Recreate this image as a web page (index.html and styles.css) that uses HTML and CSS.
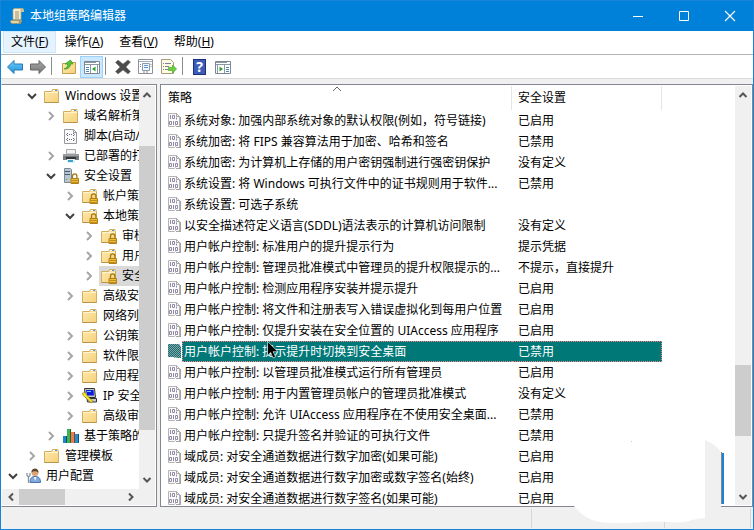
FILE: index.html
```html
<!DOCTYPE html>
<html lang="zh-CN">
<head>
    <meta charset="UTF-8">
    <meta name="viewport" content="width=device-width, initial-scale=1.0">
    <title>本地组策略编辑器</title>
    <link rel="stylesheet" href="styles.css">
</head>
<body>
    <!-- icon sprite -->
    <svg class="sprite" aria-hidden="true">
        <defs>
            <linearGradient id="folderFill" x1="0" y1="0" x2="1" y2="1">
                <stop offset="0" stop-color="#ffeab0"/>
                <stop offset="1" stop-color="#f5d17a"/>
            </linearGradient>
            <linearGradient id="backFill" x1="0" y1="0" x2="0" y2="1">
                <stop offset="0" stop-color="#6fd0fa"/>
                <stop offset="1" stop-color="#1d8fdc"/>
            </linearGradient>
            <linearGradient id="forwardFill" x1="0" y1="0" x2="0" y2="1">
                <stop offset="0" stop-color="#a8a8a8"/>
                <stop offset="1" stop-color="#777"/>
            </linearGradient>
            <pattern id="dither" width="2" height="2" patternUnits="userSpaceOnUse">
                <path d="M0 0h1v1H0zM1 1h1v1H1z" fill="#007878"/>
            </pattern>
        </defs>
        <symbol id="folder" viewBox="0 0 16 16">
            <path d="M.5 3.500h7l1-2h5.500v2h.5v11H.5z" fill="url(#folderFill)" stroke="#d3ae5f"/>
            <path d="M9 2.500h4.500" stroke="#fff"/>
            <path d="M11 2.500h2" stroke="#4a98d8"/>
            <path d="M1 4.500h13" stroke="#fff3cc"/>
            <path d="M.5 14.500h14" stroke="#b8934a"/>
        </symbol>
        <symbol id="lock" viewBox="0 0 16 16">
            <path d="M9.500 10V8a2.200 2.200 0 0 1 4.400 0v2" fill="none" stroke="#a57a10" stroke-width="1.300"/>
            <path d="M8 10.500h7.500v5H8z" fill="#efbd38" stroke="#b08018"/>
            <path d="M8.500 12.500h7M8.500 14.500h7" stroke="#c08e1c"/>
        </symbol>
        <symbol id="folder-lock" viewBox="0 0 16 16">
            <use href="#folder"/>
            <use href="#lock"/>
        </symbol>
        <symbol id="script" viewBox="0 0 16 16">
            <path d="M1.500 1.500h9l3 3v11h-12z" fill="#fafafa" stroke="#999"/>
            <path d="M10.500 1.500v3h3" fill="none" stroke="#999"/>
            <path d="M5 5L3.500 6.500 5 8M10 5l1.500 1.500L10 8M5 10l-1.500 1.500L5 13M10 10l1.500 1.500L10 13M6 6.500h1M8 6.500h1M6 11.500h1M8 11.500h1" fill="none" stroke="#667"/>
        </symbol>
        <symbol id="printer" viewBox="0 0 16 16">
            <path d="M3.500 1.500h9V6h-9z" fill="#f4f4f4" stroke="#aaa"/>
            <path d="M0 6h16v6H0z" fill="#777a80"/>
            <path d="M0 6h16v2H0z" fill="#9a9da2"/>
            <path d="M3 9h10v2H3z" fill="#333"/>
            <path d="M4 11h8v4H4z" fill="#dff2f8"/>
            <path d="M5 12h5v2H5z" fill="#38a5c6"/>
        </symbol>
        <symbol id="server-lock" viewBox="0 0 16 16">
            <path d="M1.500.5h6l1 1v13h-7z" fill="#b9c6d0" stroke="#7b8a96"/>
            <path d="M2 3.500h5M2 6.500h5" stroke="#465b6c"/>
            <path d="M3 11h1v1H3z" fill="#3bb54a"/>
            <use href="#lock"/>
        </symbol>
        <symbol id="ipsec" viewBox="0 0 16 16">
            <path d="M2.500.5h10l1 9h-10z" fill="#c4c4c4" stroke="#333"/>
            <path d="M4 2h7.500l.5 5.500H5z" fill="#0a1edc"/>
            <path d="M5 3h4v1H5z" fill="#6fc8ff"/>
            <path d="M5 10.500h9.500v3.500h-9z" fill="#c8c8c8" stroke="#333"/>
            <path d="M.5 5l3-.5 1 2.500 6 6-1 2-6.500-6-2-1.500z" fill="#ffea20" stroke="#777010" stroke-width=".6"/>
        </symbol>
        <symbol id="chart" viewBox="0 0 16 16">
            <path d="M0 8h4v7H0z" fill="#1c86c8"/>
            <path d="M4 1h4v14H4z" fill="#3eb650"/>
            <path d="M8 4h4v11H8z" fill="#f07a50"/>
            <path d="M12 6h4v9h-4z" fill="#2090d0"/>
            <path d="M3.500 8v7M7.500 1v14M11.500 4v11M15.500 6v9" stroke="#000" stroke-opacity=".45"/>
        </symbol>
        <symbol id="user" viewBox="0 0 16 16">
            <circle cx="10" cy="4.500" r="3.500" fill="#d9a577"/>
            <path d="M6.500 4.500c-.5-5 7-5.500 7 0-2-1.500-5-2-7 0z" fill="#59432f"/>
            <path d="M5 14.500c0-4.500 2-6 5-6s5.500 1 5.500 6z" fill="#80aadd" stroke="#4b73ab"/>
            <path d="M9 9l1 4 1.500-4z" fill="#fff"/>
            <path d="M2 5v2.500L3.500 9 5 7.500V5M3.500 9v6" fill="none" stroke="#8895a4" stroke-width="1.300"/>
        </symbol>
        <symbol id="policy" viewBox="0 0 14 16">
            <path d="M.5 1.500h8l3 3v10h-3l-1-1-1 1h-6z" fill="#fafafa" stroke="#b4b4b4"/>
            <path d="M8.500 1.500v3h3M12.500 5v9M8 14.500h5" fill="none" stroke="#a4a4a4"/>
            <path d="M2.500 3v4M8.500 5.500v2M5.500 9v4" stroke="#9389a6"/>
            <path d="M4.500 3.500h2v3h-2zM1.500 9.500h2v3h-2zM7.500 9.500h2v3h-2z" fill="none" stroke="#9389a6"/>
        </symbol>
        <symbol id="policy-selected" viewBox="0 0 14 16">
            <path d="M0 1h11l2 3v11h-4l-1-1-1 1-1-1H0z" fill="#9a9aa4"/>
            <path d="M0 1h11l2 3v11h-4l-1-1-1 1-1-1H0z" fill="url(#dither)"/>
        </symbol>
        <symbol id="chevron-right" viewBox="0 0 16 16">
            <path d="M6 4l4 4-4 4" fill="none" stroke="#a6a6a6" stroke-width="2"/>
        </symbol>
        <symbol id="chevron-down" viewBox="0 0 16 16">
            <path d="M4 6l4 4 4-4" fill="none" stroke="#404040" stroke-width="2"/>
        </symbol>
        <symbol id="arrow-up" viewBox="0 0 16 16">
            <path d="M4.500 10L8 6.500l3.500 3.500" fill="none" stroke="#555" stroke-width="2"/>
        </symbol>
        <symbol id="arrow-down" viewBox="0 0 16 16">
            <path d="M4.500 6L8 9.500 11.500 6" fill="none" stroke="#555" stroke-width="2"/>
        </symbol>
        <symbol id="arrow-left" viewBox="0 0 16 16">
            <path d="M10 4.500L6.500 8l3.500 3.500" fill="none" stroke="#555" stroke-width="2"/>
        </symbol>
        <symbol id="arrow-right" viewBox="0 0 16 16">
            <path d="M6 4.500L9.500 8 6 11.500" fill="none" stroke="#555" stroke-width="2"/>
        </symbol>
    </svg>

    <div class="window">
        <header class="title-bar">
            <svg class="app-icon" viewBox="0 0 16 16">
                <path d="M4 2c0-1 1-1.500 2-1.500h8c-1.500 0-2 1-2 2v9H4z" fill="#f6ecce" stroke="#b9a67a" stroke-width=".7"/>
                <path d="M12 2.500c0-3 3-2.500 3-.5v2h-3z" fill="#cfbd8e"/>
                <path d="M1.500 12.500H10c0 2 .5 3 2 3H3.500c-1.500 0-2-1-2-3z" fill="#e7d7a8" stroke="#a8935f" stroke-width=".7"/>
                <path d="M10 12c0 4 3 4 3 0z" fill="#b49a60"/>
                <path d="M6 4h4M6 6h4M6 8h4M6 10h4" stroke="#9c8f72"/>
            </svg>
            <h1>本地组策略编辑器</h1>
            <div class="window-buttons">
                <button aria-label="最小化"><svg viewBox="0 0 12 12"><path d="M1 6.500h10" stroke="#fff"/></svg></button>
                <button aria-label="最大化"><svg viewBox="0 0 12 12"><path d="M1.500 1.500h9v9h-9z" fill="none" stroke="#fff"/></svg></button>
                <button aria-label="关闭"><svg viewBox="0 0 12 12"><path d="M1 1l10 10M11 1L1 11" stroke="#fff" stroke-width="1.200"/></svg></button>
            </div>
        </header>

        <nav class="menu-bar">
            <button class="active">文件(<u>F</u>)</button>
            <button>操作(<u>A</u>)</button>
            <button>查看(<u>V</u>)</button>
            <button>帮助(<u>H</u>)</button>
        </nav>

        <div class="toolbar">
            <button aria-label="后退"><svg viewBox="0 0 16 16"><path d="M.5 8L7 1.500v3.500h8.500v6H7v3.500z" fill="url(#backFill)" stroke="#2b78b4"/></svg></button>
            <button aria-label="前进"><svg viewBox="0 0 16 16"><path d="M15.500 8L9 1.500v3.500H.5v6H9v3.500z" fill="url(#forwardFill)" stroke="#666"/></svg></button>
            <span class="separator"></span>
            <button aria-label="上一级"><svg viewBox="0 0 16 16"><path d="M1.500 4.500h6l1-1h6v11h-13z" fill="url(#folderFill)" stroke="#c59d4c"/><path d="M3 10c3-1 4-3 3.500-5H4L9.500 1 12 5H9.500C9.500 8 7 10.500 3 10z" fill="#55c433" stroke="#3a9422" stroke-width=".7"/></svg></button>
            <button class="active" aria-label="显示控制台树"><svg viewBox="0 0 16 16"><path d="M.5 2.500h15v12H.5z" fill="#fff" stroke="#7c8794"/><path d="M1 3.500h14M1 5.500h14" stroke="#8d98a5"/><path d="M12 3.500h3" stroke="#fff"/><path d="M2 8.500h3M2 10.500h3M2 12.500h3" stroke="#4a86b8"/><path d="M6.500 6v8M13.500 6v8" stroke="#8d98a5"/><path d="M11.500 7.500v5L8 10z" fill="#2fa02c"/></svg></button>
            <span class="separator"></span>
            <button aria-label="删除"><svg viewBox="0 0 16 16"><path d="M.5 3.500L3 1l5 4 5-4 2.500 2L11 8l4.500 4.500L13 15l-5-4-5 4-2.500-2.500L5 8z" fill="#4c4c4c" stroke="#777" stroke-width=".5"/></svg></button>
            <button aria-label="属性"><svg viewBox="0 0 16 16"><path d="M.5.5h14v14H.5z" fill="#fff" stroke="#8c929a"/><path d="M1 2.500h13" stroke="#aab"/><path d="M4.500 4.500h7v7h-7z" fill="#f3f6fa" stroke="#8a9cb0"/><path d="M6 6.500h4M6 8.500h4" stroke="#5b97cc"/><path d="M2.500 5v1M2.500 7v1M13 5v1M13 7v1M5 13h2M8 13h2" stroke="#889"/></svg></button>
            <button aria-label="导出列表"><svg viewBox="0 0 16 16"><path d="M.5.5h9l3 3v11H.5z" fill="#fffbe0" stroke="#a59c80"/><path d="M2 4.500h1M4 4.500h6M2 7.500h1M4 7.500h4M2 10.500h1M4 10.500h3" stroke="#7c7ca8"/><path d="M7.500 8.500h4V6l4 4-4 4v-2.500h-4z" fill="#6cd040" stroke="#45a528" stroke-width=".7"/></svg></button>
            <span class="separator"></span>
            <button class="help" aria-label="帮助"><span>?</span></button>
            <button aria-label="显示操作窗格"><svg viewBox="0 0 16 16"><path d="M.5 2.500h15v12H.5z" fill="#fff" stroke="#7c8794"/><path d="M1 3.500h14M1 5.500h14" stroke="#8d98a5"/><path d="M12 3.500h3" stroke="#fff"/><path d="M11 8.500h3M11 10.500h3M11 12.500h3" stroke="#4a86b8"/><path d="M9.500 6v8M2.500 6v8" stroke="#8d98a5"/><path d="M4.500 7.500v5L8 10z" fill="#2fa02c"/></svg></button>
        </div>

        <main>
            <aside class="tree-pane">
                <div class="tree-body">
                    <ul class="tree">
                        <li>
                            <ul>
                                <li>
                                    <div class="node"><svg><use href="#chevron-down"/></svg><svg><use href="#folder"/></svg><span>Windows 设置</span></div>
                                    <ul>
                                        <li><div class="node"><svg><use href="#chevron-right"/></svg><svg><use href="#folder"/></svg><span>域名解析策略</span></div></li>
                                        <li><div class="node"><svg></svg><svg><use href="#script"/></svg><span>脚本(启动/关机)</span></div></li>
                                        <li><div class="node"><svg><use href="#chevron-right"/></svg><svg><use href="#printer"/></svg><span>已部署的打印机</span></div></li>
                                        <li>
                                            <div class="node"><svg><use href="#chevron-down"/></svg><svg><use href="#server-lock"/></svg><span>安全设置</span></div>
                                            <ul>
                                                <li><div class="node"><svg><use href="#chevron-right"/></svg><svg><use href="#folder-lock"/></svg><span>帐户策略</span></div></li>
                                                <li>
                                                    <div class="node"><svg><use href="#chevron-down"/></svg><svg><use href="#folder-lock"/></svg><span>本地策略</span></div>
                                                    <ul>
                                                        <li><div class="node"><svg><use href="#chevron-right"/></svg><svg><use href="#folder-lock"/></svg><span>审核策略</span></div></li>
                                                        <li><div class="node"><svg><use href="#chevron-right"/></svg><svg><use href="#folder-lock"/></svg><span>用户权限分配</span></div></li>
                                                        <li><div class="node current"><svg><use href="#chevron-right"/></svg><svg><use href="#folder-lock"/></svg><span>安全选项</span></div></li>
                                                    </ul>
                                                </li>
                                                <li><div class="node"><svg><use href="#chevron-right"/></svg><svg><use href="#folder"/></svg><span>高级安全</span></div></li>
                                                <li><div class="node"><svg></svg><svg><use href="#folder"/></svg><span>网络列表管理器策略</span></div></li>
                                                <li><div class="node"><svg><use href="#chevron-right"/></svg><svg><use href="#folder"/></svg><span>公钥策略</span></div></li>
                                                <li><div class="node"><svg><use href="#chevron-right"/></svg><svg><use href="#folder"/></svg><span>软件限制策略</span></div></li>
                                                <li><div class="node"><svg><use href="#chevron-right"/></svg><svg><use href="#folder"/></svg><span>应用程序控制策略</span></div></li>
                                                <li><div class="node"><svg><use href="#chevron-right"/></svg><svg><use href="#ipsec"/></svg><span>IP 安全策略</span></div></li>
                                                <li><div class="node"><svg><use href="#chevron-right"/></svg><svg><use href="#folder"/></svg><span>高级审核策略配置</span></div></li>
                                            </ul>
                                        </li>
                                        <li><div class="node"><svg><use href="#chevron-right"/></svg><svg><use href="#chart"/></svg><span>基于策略的 QoS</span></div></li>
                                    </ul>
                                </li>
                                <li><div class="node"><svg><use href="#chevron-right"/></svg><svg><use href="#folder"/></svg><span>管理模板</span></div></li>
                            </ul>
                        </li>
                        <li><div class="node"><svg><use href="#chevron-down"/></svg><svg><use href="#user"/></svg><span>用户配置</span></div></li>
                    </ul>
                    <div class="scrollbar tree-scroll">
                        <button aria-label="向上滚动"><svg><use href="#arrow-up"/></svg></button>
                        <span class="before"></span><span class="thumb"></span><span class="after"></span>
                        <button aria-label="向下滚动"><svg><use href="#arrow-down"/></svg></button>
                    </div>
                </div>
                <div class="scrollbar horizontal">
                    <button aria-label="向左滚动"><svg><use href="#arrow-left"/></svg></button>
                    <span class="thumb"></span><span class="after"></span>
                    <button aria-label="向右滚动"><svg><use href="#arrow-right"/></svg></button>
                </div>
            </aside>

            <section class="list-pane">
                <div class="list-body">
                    <table>
                        <thead>
                            <tr>
                                <th class="col-policy">策略<svg class="sort" viewBox="0 0 10 6"><path d="M1 5l4-4 4 4" fill="none" stroke="#666"/></svg></th>
                                <th class="col-setting">安全设置</th>
                                <th></th>
                            </tr>
                        </thead>
                        <tbody>
                            <tr><td><div class="policy"><svg><use href="#policy"/></svg><span>系统对象: 加强内部系统对象的默认权限(例如，符号链接)</span></div></td><td>已启用</td><td></td></tr>
                            <tr><td><div class="policy"><svg><use href="#policy"/></svg><span>系统加密: 将 FIPS 兼容算法用于加密、哈希和签名</span></div></td><td>已禁用</td><td></td></tr>
                            <tr><td><div class="policy"><svg><use href="#policy"/></svg><span>系统加密: 为计算机上存储的用户密钥强制进行强密钥保护</span></div></td><td>没有定义</td><td></td></tr>
                            <tr><td><div class="policy"><svg><use href="#policy"/></svg><span>系统设置: 将 Windows 可执行文件中的证书规则用于软件...</span></div></td><td>已禁用</td><td></td></tr>
                            <tr><td><div class="policy"><svg><use href="#policy"/></svg><span>系统设置: 可选子系统</span></div></td><td></td><td></td></tr>
                            <tr><td><div class="policy"><svg><use href="#policy"/></svg><span>以安全描述符定义语言(SDDL)语法表示的计算机访问限制</span></div></td><td>没有定义</td><td></td></tr>
                            <tr><td><div class="policy"><svg><use href="#policy"/></svg><span>用户帐户控制: 标准用户的提升提示行为</span></div></td><td>提示凭据</td><td></td></tr>
                            <tr><td><div class="policy"><svg><use href="#policy"/></svg><span>用户帐户控制: 管理员批准模式中管理员的提升权限提示的...</span></div></td><td>不提示，直接提升</td><td></td></tr>
                            <tr><td><div class="policy"><svg><use href="#policy"/></svg><span>用户帐户控制: 检测应用程序安装并提示提升</span></div></td><td>已启用</td><td></td></tr>
                            <tr><td><div class="policy"><svg><use href="#policy"/></svg><span>用户帐户控制: 将文件和注册表写入错误虚拟化到每用户位置</span></div></td><td>已启用</td><td></td></tr>
                            <tr><td><div class="policy"><svg><use href="#policy"/></svg><span>用户帐户控制: 仅提升安装在安全位置的 UIAccess 应用程序</span></div></td><td>已启用</td><td></td></tr>
                            <tr class="selected"><td><div class="policy"><svg><use href="#policy-selected"/></svg><span>用户帐户控制: 提示提升时切换到安全桌面</span><svg class="cursor" viewBox="0 0 12 19"><path d="M.5.5v14l3.200-3 2.300 5.500 2.500-1-2.300-5.300h4.800z" fill="#000" stroke="#fff" stroke-width=".6"/></svg></div></td><td>已禁用</td><td></td></tr>
                            <tr><td><div class="policy"><svg><use href="#policy"/></svg><span>用户帐户控制: 以管理员批准模式运行所有管理员</span></div></td><td>已启用</td><td></td></tr>
                            <tr><td><div class="policy"><svg><use href="#policy"/></svg><span>用户帐户控制: 用于内置管理员帐户的管理员批准模式</span></div></td><td>没有定义</td><td></td></tr>
                            <tr><td><div class="policy"><svg><use href="#policy"/></svg><span>用户帐户控制: 允许 UIAccess 应用程序在不使用安全桌面...</span></div></td><td>已禁用</td><td></td></tr>
                            <tr><td><div class="policy"><svg><use href="#policy"/></svg><span>用户帐户控制: 只提升签名并验证的可执行文件</span></div></td><td>已禁用</td><td></td></tr>
                            <tr><td><div class="policy"><svg><use href="#policy"/></svg><span>域成员: 对安全通道数据进行数字加密(如果可能)</span></div></td><td>已启用</td><td></td></tr>
                            <tr><td><div class="policy"><svg><use href="#policy"/></svg><span>域成员: 对安全通道数据进行数字加密或数字签名(始终)</span></div></td><td>已启用</td><td></td></tr>
                            <tr><td><div class="policy"><svg><use href="#policy"/></svg><span>域成员: 对安全通道数据进行数字签名(如果可能)</span></div></td><td>已启用</td><td></td></tr>
                        </tbody>
                    </table>
                </div>
                <div class="scrollbar list-scroll">
                    <button aria-label="向上滚动"><svg><use href="#arrow-up"/></svg></button>
                    <span class="before"></span><span class="thumb"></span><span class="after"></span>
                    <button aria-label="向下滚动"><svg><use href="#arrow-down"/></svg></button>
                </div>
            </section>
        </main>

        <footer class="status-bar"><span></span><span></span><span></span></footer>

        <!-- erased corner over the list and the status bar -->
        <svg class="patch" viewBox="0 0 150 86" aria-hidden="true">
            <path d="M131 1q9 3 16 12v56h-16z" fill="#f0f0f0"/>
            <path d="M0 0h131v79q-10 1-16 3t-20 1-24 0-24 1-22-1Q10 80 0 67z" fill="#fff"/>
            <path d="M147.500 13v52" stroke="#828790"/>
            <path d="M149 14v51" stroke="#1883d7" stroke-width="2"/>
            <path d="M57 2h1v1h-1z" fill="#ccc"/>
        </svg>
    </div>
</body>
</html>
```

FILE: styles.css
```css
:root {
    --accent: #0081d9;
    --window-border: #1883d7;
    --chrome: #f0f0f0;
    --pane-border: #828790;
    --thumb: #cdcdcd;
    --selected: #007878;
}

* {
    box-sizing: border-box;
}

body {
    margin: 0;
    font-family: "Noto Sans", "Noto Sans CJK SC", sans-serif;
    font-size: 12px;
    line-height: 20px;
    color: #000;
}

button {
    margin: 0;
    padding: 0;
    border: 0;
    background: none;
    font: inherit;
    color: inherit;
}

svg {
    display: block;
    flex: none;
}

ul {
    margin: 0;
    padding: 0;
    list-style: none;
}

.sprite {
    position: absolute;
    width: 0;
    height: 0;
}

.window {
    position: relative;
    display: flex;
    flex-direction: column;
    height: 100vh;
    border: 1px solid var(--window-border);
    background: var(--chrome);
    overflow: hidden;
}

/* title bar */
.title-bar {
    display: flex;
    align-items: center;
    height: 30px;
    flex: none;
    padding-left: 8px;
    background: var(--accent);
    color: #fff;
}

.app-icon {
    width: 16px;
    height: 16px;
    margin-right: 5px;
}

.title-bar h1 {
    flex: 1;
    margin: 0;
    font-size: 12px;
    font-weight: normal;
}

.window-buttons {
    display: flex;
}

.window-buttons button {
    display: flex;
    align-items: center;
    justify-content: center;
    width: 46px;
    height: 28px;
}

.window-buttons svg {
    width: 12px;
    height: 12px;
}

/* menu and toolbar */
.menu-bar {
    display: flex;
    flex: none;
    height: 23px;
    padding-left: 2px;
    background: #fff;
}

.menu-bar button {
    height: 22px;
    padding: 0 7px;
    border: 1px solid transparent;
}

.menu-bar button.active {
    background: #e5f3ff;
    border-color: #cce8ff;
}

.toolbar {
    display: flex;
    flex: none;
    height: 25px;
    padding: 1px 2px 0;
    border-top: 1px solid #b4b4b4;
    border-bottom: 1px solid #dadada;
    background: #fff;
}

.toolbar button {
    display: flex;
    align-items: center;
    justify-content: center;
    width: 23px;
    height: 22px;
}

.toolbar button.active {
    background: #cce8ff;
    border: 1px solid #99d1ff;
}

.toolbar svg {
    width: 16px;
    height: 16px;
}

.toolbar .separator {
    width: 1px;
    height: 18px;
    margin: 1px 5px 0 2px;
    background: #8c8c8c;
}

.toolbar .help span {
    width: 13px;
    height: 16px;
    border: 1px solid #1c2f78;
    background: #3d5cb8;
    color: #fff;
    font-size: 14px;
    font-weight: bold;
    line-height: 14px;
}

/* panes */
main {
    display: flex;
    flex: 1;
    min-height: 0;
    gap: 3px;
    padding-top: 5px;
}

.tree-pane,
.list-pane {
    display: flex;
    min-width: 0;
    padding: 1px 1px 1px 0;
    border: 1px solid var(--pane-border);
    background: #fff;
}

.tree-pane {
    flex: 0 0 156px;
    flex-direction: column;
    border-left-color: #fff;
}

.list-pane {
    flex: 1;
}

.tree-body {
    display: flex;
    flex: 1;
    min-height: 0;
}

.tree {
    flex: 1;
    min-width: 0;
    overflow: hidden;
}

.tree > li {
    padding-left: 3px;
}

.tree ul {
    padding-left: 19px;
}

.node {
    display: flex;
    align-items: center;
    height: 20px;
    overflow: hidden;
    white-space: nowrap;
}

.node svg {
    width: 16px;
    height: 16px;
}

.node svg:first-child {
    margin-right: 4px;
}

.node span {
    padding-left: 5px;
}

.node.current {
    background: linear-gradient(to right, transparent 18px, #d9d9d9 18px);
}

.scrollbar {
    display: flex;
    flex-direction: column;
    flex: none;
    width: 16px;
    background: var(--chrome);
}

.scrollbar.horizontal {
    flex-direction: row;
    width: auto;
    height: 16px;
    padding-right: 16px;
}

.scrollbar button {
    display: flex;
    align-items: center;
    justify-content: center;
    flex: 0 0 17px;
}

.scrollbar svg {
    width: 16px;
    height: 16px;
}

.thumb {
    background: var(--thumb);
}

.tree-scroll .before { flex: 43; }
.tree-scroll .thumb { flex: 283; }
.tree-scroll .after { flex: 42; }

.list-scroll .before { flex: 262; }
.list-scroll .thumb { flex: 71; }
.list-scroll .after { flex: 52; }

.horizontal .thumb { flex: 45; }
.horizontal .after { flex: 56; }

/* policy list */
.list-body {
    flex: 1;
    min-width: 0;
    overflow: hidden;
}

table {
    width: 100%;
    border-collapse: separate;
    border-spacing: 0;
    table-layout: fixed;
}

th,
td {
    padding: 0;
    text-align: left;
    font-weight: normal;
    white-space: nowrap;
}

th {
    position: relative;
    height: 24px;
    border-right: 1px solid #e5e5e5;
}

th:last-child {
    border-right: 0;
}

.col-policy {
    width: 351px;
    padding-left: 7px;
}

.col-setting {
    width: 150px;
    padding-left: 6px;
}

.sort {
    position: absolute;
    top: 0;
    left: 50%;
    width: 10px;
    height: 6px;
    margin-left: -4px;
}

td {
    height: 21px;
}

td:nth-child(2) {
    padding-left: 6px;
}

.policy {
    position: relative;
    display: flex;
    height: 21px;
    padding-left: 7px;
}

.policy svg {
    width: 14px;
    height: 16px;
    margin-top: 2px;
}

.policy span {
    flex: 1;
    height: 21px;
    padding-left: 1px;
    border: 1px solid transparent;
    border-right: 0;
    line-height: 19px;
}

.selected .policy span,
.selected td:nth-child(2) {
    background: var(--selected);
    color: #fff;
    border: 1px dotted #ff8787;
}

.selected .policy span {
    border-right: 0;
}

.selected td:nth-child(2) {
    border-left: 0;
    line-height: 19px;
}

.policy .cursor {
    position: absolute;
    top: 0;
    left: 106px;
    width: 12px;
    height: 19px;
    margin: 0;
}

/* status bar */
.status-bar {
    display: flex;
    flex: none;
    height: 22px;
    padding: 2px 2px 1px 0;
}

.status-bar span {
    border-right: 1px solid #d7d7d7;
}

.status-bar span:nth-child(1) { flex: 532; }
.status-bar span:nth-child(2) { flex: 133; }
.status-bar span:nth-child(3) { flex: 85; }

.patch {
    position: absolute;
    right: 29px;
    bottom: 4px;
    width: 150px;
    height: 86px;
}
```
